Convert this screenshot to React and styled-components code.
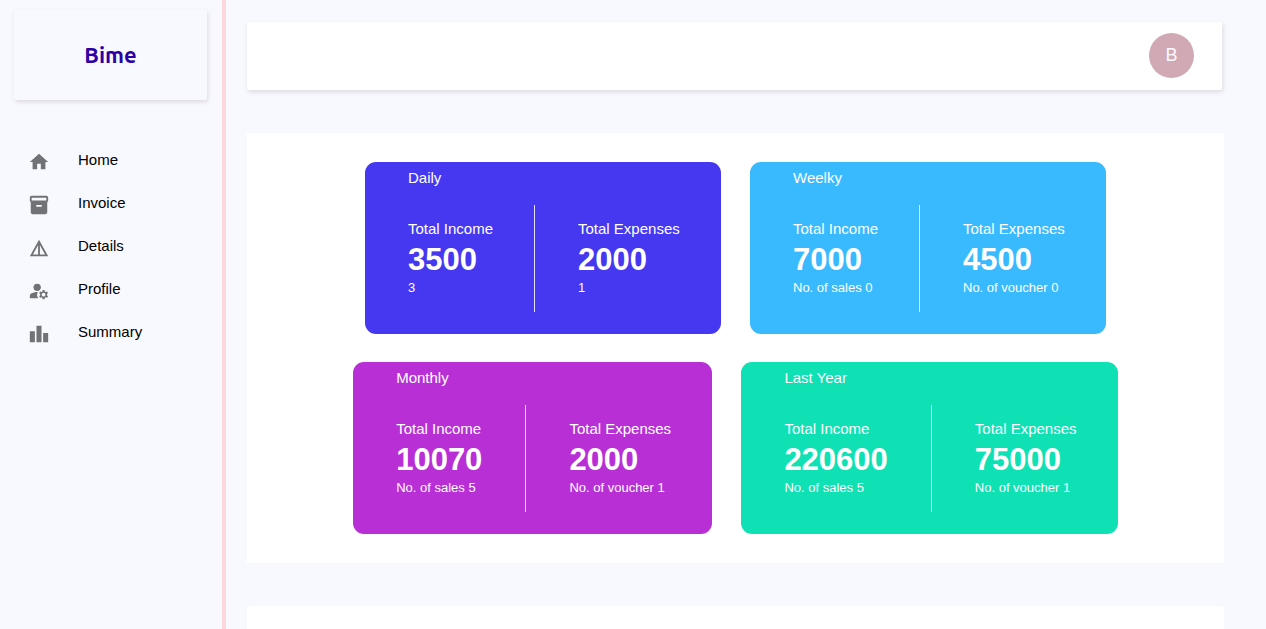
import React from "react";
import styled, { createGlobalStyle } from "styled-components";
import {
  MdHome,
  MdInventory2,
  MdDetails,
  MdManageAccounts,
  MdLeaderboard,
} from "react-icons/md";

const GlobalStyle = createGlobalStyle`
  *, *::before, *::after { box-sizing: border-box; }
  body {
    margin: 0;
    background: #f8f9ff;
    color: #000;
    font-family: "Liberation Sans", Arial, sans-serif;
    font-size: 15px;
  }
`;

const Shell = styled.div`
  display: flex;
  height: 100vh;
`;

const Sidebar = styled.aside`
  flex: 0 0 226px;
  padding: 10px 15px 0 14px;
  border-right: 4px solid #ffd8dc;
`;

const Brand = styled.div`
  display: flex;
  align-items: center;
  justify-content: center;
  height: 90px;
  border-radius: 2px;
  box-shadow: 1px 2px 5px rgba(60, 30, 30, 0.14);
`;

const BrandName = styled.h1`
  margin: 0;
  color: #2c00a3;
  font-family: Ubuntu, "Noto Sans", sans-serif;
  font-size: 22px;
  font-weight: 700;
  line-height: 28px;
`;

const NavList = styled.ul`
  margin: 0;
  padding: 40px 0 0;
  list-style: none;
`;

const NavLink = styled.a`
  display: flex;
  align-items: center;
  gap: 28px;
  height: 43px;
  padding-left: 14px;
  color: inherit;
  line-height: 20px;
  text-decoration: none;

  svg {
    flex: none;
    width: 22px;
    height: 22px;
    color: #717275;
  }
`;

const NavText = styled.span`
  padding-bottom: 3px;
`;

const Main = styled.main`
  flex: 1;
  min-width: 0;
  padding: 22px 42px 0 21px;
  overflow-y: auto;
  scrollbar-width: none;
`;

const TopBar = styled.header`
  display: flex;
  align-items: center;
  justify-content: flex-end;
  height: 68px;
  margin: 0 2px 43px 0;
  padding: 0 28px 2px 0;
  border-radius: 2px;
  background: #fff;
  box-shadow: 1px 2px 5px rgba(60, 30, 30, 0.14);
`;

const Avatar = styled.button`
  width: 45px;
  height: 45px;
  padding: 0;
  border: 0;
  border-radius: 50%;
  background: #d1a9b5;
  color: #faf9ff;
  font: 18px/45px "Liberation Sans", Arial, sans-serif;
  text-align: center;
`;

const Panel = styled.section`
  display: flex;
  flex-direction: column;
  gap: 28px;
  min-height: 430px;
  margin-bottom: 43px;
  padding: 29px;
  background: #fff;
`;

const CardRow = styled.div`
  display: flex;
  flex-wrap: wrap;
  justify-content: center;
  gap: 29px;
`;

const Card = styled.article`
  padding: 5px 43px 22px;
  border-radius: 11px;
  background: ${(p) => p.$color};
  color: #fff;
`;

const CardTitle = styled.h2`
  margin: 0 0 16px;
  font-size: 15px;
  font-weight: 400;
  line-height: 22px;
`;

const Stats = styled.div`
  display: flex;
`;

const Stat = styled.div`
  padding: 12px 0 16px;

  & + & {
    margin-left: 43px;
    padding-left: 43px;
    border-left: 1px solid rgba(255, 255, 255, 0.85);
  }
`;

const StatLabel = styled.div`
  width: ${(p) => p.$width}px;
  line-height: 23px;
  white-space: nowrap;
`;

const StatValue = styled.div`
  font-size: 31px;
  font-weight: 700;
  line-height: 40px;
`;

const StatNote = styled.div`
  font-size: 13px;
  line-height: 16px;
`;

const navItems = [
  { label: "Home", Icon: MdHome },
  { label: "Invoice", Icon: MdInventory2 },
  { label: "Details", Icon: MdDetails },
  { label: "Profile", Icon: MdManageAccounts },
  { label: "Summary", Icon: MdLeaderboard },
];

const cardRows = [
  [
    { title: "Daily", color: "#4538f0", income: "3500", sales: "3", expenses: "2000", vouchers: "1" },
    { title: "Weelky", color: "#39baff", income: "7000", sales: "No. of sales 0", expenses: "4500", vouchers: "No. of voucher 0" },
  ],
  [
    { title: "Monthly", color: "#b82fd6", income: "10070", sales: "No. of sales 5", expenses: "2000", vouchers: "No. of voucher 1" },
    { title: "Last Year", color: "#0fe1b4", income: "220600", sales: "No. of sales 5", expenses: "75000", vouchers: "No. of voucher 1" },
  ],
];

function SummaryCard({ title, color, income, sales, expenses, vouchers }) {
  return (
    <Card $color={color}>
      <CardTitle>{title}</CardTitle>
      <Stats>
        <Stat>
          <StatLabel $width={83}>Total Income</StatLabel>
          <StatValue>{income}</StatValue>
          <StatNote>{sales}</StatNote>
        </Stat>
        <Stat>
          <StatLabel $width={100}>Total Expenses</StatLabel>
          <StatValue>{expenses}</StatValue>
          <StatNote>{vouchers}</StatNote>
        </Stat>
      </Stats>
    </Card>
  );
}

export default function App() {
  return (
    <>
      <GlobalStyle />
      <Shell>
        <Sidebar>
          <Brand>
            <BrandName>Bime</BrandName>
          </Brand>
          <nav>
            <NavList>
              {navItems.map(({ label, Icon }) => (
                <li key={label}>
                  <NavLink href="#">
                    <Icon aria-hidden="true" />
                    <NavText>{label}</NavText>
                  </NavLink>
                </li>
              ))}
            </NavList>
          </nav>
        </Sidebar>
        <Main>
          <TopBar>
            <Avatar type="button">B</Avatar>
          </TopBar>
          <Panel>
            {cardRows.map((row) => (
              <CardRow key={row[0].title}>
                {row.map((card) => (
                  <SummaryCard key={card.title} {...card} />
                ))}
              </CardRow>
            ))}
          </Panel>
          <Panel />
        </Main>
      </Shell>
    </>
  );
}
